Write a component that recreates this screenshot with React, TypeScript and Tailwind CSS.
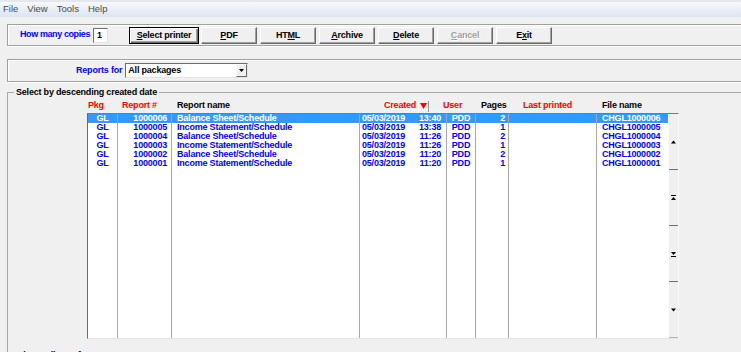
import React from "react";

interface Report {
  pkg: string;
  num: string;
  name: string;
  date: string;
  time: string;
  user: string;
  pages: string;
  printed: string;
  file: string;
}

const REPORTS: Report[] = [
  { pkg: "GL", num: "1000006", name: "Balance Sheet/Schedule", date: "05/03/2019", time: "13:40", user: "PDD", pages: "2", printed: "", file: "CHGL1000006" },
  { pkg: "GL", num: "1000005", name: "Income Statement/Schedule", date: "05/03/2019", time: "13:38", user: "PDD", pages: "1", printed: "", file: "CHGL1000005" },
  { pkg: "GL", num: "1000004", name: "Balance Sheet/Schedule", date: "05/03/2019", time: "11:26", user: "PDD", pages: "2", printed: "", file: "CHGL1000004" },
  { pkg: "GL", num: "1000003", name: "Income Statement/Schedule", date: "05/03/2019", time: "11:26", user: "PDD", pages: "1", printed: "", file: "CHGL1000003" },
  { pkg: "GL", num: "1000002", name: "Balance Sheet/Schedule", date: "05/03/2019", time: "11:20", user: "PDD", pages: "2", printed: "", file: "CHGL1000002" },
  { pkg: "GL", num: "1000001", name: "Income Statement/Schedule", date: "05/03/2019", time: "11:20", user: "PDD", pages: "1", printed: "", file: "CHGL1000001" },
];

const COLUMNS: { width: string; align: string; cell: (r: Report) => React.ReactNode }[] = [
  { width: "w-[30px]", align: "justify-center", cell: (r) => r.pkg },
  { width: "w-[54px]", align: "justify-end pr-[4px]", cell: (r) => r.num },
  { width: "w-[188px]", align: "justify-start pl-[5px]", cell: (r) => r.name },
  {
    width: "w-[87px]",
    align: "justify-between pl-[2px] pr-[5px]",
    cell: (r) => (
      <>
        <span>{r.date}</span>
        <span>{r.time}</span>
      </>
    ),
  },
  { width: "w-[29px]", align: "justify-center", cell: (r) => r.user },
  { width: "w-[33px]", align: "justify-end pr-[3px]", cell: (r) => r.pages },
  { width: "w-[88px]", align: "justify-start pl-[4px]", cell: (r) => r.printed },
  { width: "w-[71px]", align: "justify-start pl-[5px]", cell: (r) => r.file },
];

const BUTTONS = [
  { pre: "", key: "S", post: "elect printer", width: "w-[70px]", gap: "", primary: true, disabled: false },
  { pre: "", key: "P", post: "DF", width: "w-[56px]", gap: "ml-[2px]", primary: false, disabled: false },
  { pre: "HT", key: "M", post: "L", width: "w-[56px]", gap: "ml-[3px]", primary: false, disabled: false },
  { pre: "", key: "A", post: "rchive", width: "w-[56px]", gap: "ml-[3px]", primary: false, disabled: false },
  { pre: "", key: "D", post: "elete", width: "w-[56px]", gap: "ml-[3px]", primary: false, disabled: false },
  { pre: "", key: "C", post: "ancel", width: "w-[56px]", gap: "ml-[3px]", primary: false, disabled: true },
  { pre: "E", key: "x", post: "it", width: "w-[56px]", gap: "ml-[3px]", primary: false, disabled: false },
];

function ScrollGlyph({ kind }: { kind: "up" | "pageUp" | "pageDown" | "down" }) {
  return (
    <svg width="5" height="6" viewBox="0 0 5 6" className="block">
      {kind === "up" && <path d="M2.5 1.5 L5 4.5 L0 4.5 Z" fill="#000" />}
      {kind === "down" && <path d="M0 1.5 L5 1.5 L2.5 4.5 Z" fill="#000" />}
      {kind === "pageUp" && (
        <>
          <rect x="0" y="0" width="5" height="1" fill="#000" />
          <path d="M2.5 2 L5 5 L0 5 Z" fill="#000" />
        </>
      )}
      {kind === "pageDown" && (
        <>
          <path d="M0 1 L5 1 L2.5 4 Z" fill="#000" />
          <rect x="0" y="5" width="5" height="1" fill="#000" />
        </>
      )}
    </svg>
  );
}

export default function App() {
  return (
    <div className="w-[741px] h-[352px] overflow-hidden bg-[#f0f0f0] [font-family:'Liberation_Sans',Arial,sans-serif] text-[9px] tracking-[-0.2px] font-bold text-black">
      {/* Menu bar */}
      <div className="h-[17px] flex items-center gap-[9px] pl-[3px] border-t-[2px] border-[#e4e8ee] bg-gradient-to-b from-[#f6f9fc] to-[#dbe5f1] text-[9.5px] tracking-normal font-normal text-[#4a4a4a]">
        <span>File</span>
        <span>View</span>
        <span>Tools</span>
        <span>Help</span>
      </div>

      {/* Copies + action buttons */}
      <div className="mt-[7px] ml-[7px] w-[745px] h-[22px] flex items-center pl-[12px] border border-[#a0a0a0] shadow-[inset_1px_1px_0_#fff,0_1px_0_#fff]">
        <span className="text-[#0000ff] tracking-[-0.4px]">How many copies</span>
        <div className="ml-[3px] w-[15px] h-[15px] bg-white border border-t-[#6d6d6d] border-l-[#6d6d6d] border-r-[#e3e3e3] border-b-[#e3e3e3] pl-[3px] leading-[13px]">
          1
        </div>
        <div className="ml-[21px] flex items-center">
          {BUTTONS.map((b) => (
            <button
              key={b.key + b.post}
              className={`${b.width} ${b.gap} h-[17px] flex items-center justify-center bg-[#f0f0f0] font-bold leading-none ${
                b.primary
                  ? "border border-black shadow-[inset_1px_1px_0_#fff,inset_-1px_-1px_0_#696969,inset_-2px_-2px_0_#a0a0a0]"
                  : "border border-t-white border-l-white border-r-[#696969] border-b-[#696969] shadow-[inset_-1px_-1px_0_#a0a0a0]"
              } ${b.disabled ? "text-[#a0a0a0] [text-shadow:1px_1px_0_#fff]" : "text-black"}`}
            >
              {b.pre}
              <span className="underline underline-offset-1">{b.key}</span>
              {b.post}
            </button>
          ))}
        </div>
      </div>

      {/* Package filter */}
      <div className="mt-[13px] ml-[7px] w-[745px] h-[23px] flex items-center pl-[68px] border border-[#a0a0a0] shadow-[inset_1px_1px_0_#fff,0_1px_0_#fff]">
        <span className="text-[#0000ff]">Reports for</span>
        <div className="ml-[3px] w-[123px] h-[15px] flex items-center bg-white border border-t-[#6d6d6d] border-l-[#6d6d6d] border-r-[#e3e3e3] border-b-[#e3e3e3]">
          <span className="flex-1 pl-[2px]">All packages</span>
          <span className="w-[11px] h-[13px] flex items-center justify-center bg-[#f0f0f0] border border-t-white border-l-white border-r-[#696969] border-b-[#696969]">
            <svg width="5" height="3" viewBox="0 0 5 3">
              <path d="M0 0 L5 0 L2.5 3 Z" fill="#000" />
            </svg>
          </span>
        </div>
      </div>

      {/* Report list group */}
      <fieldset className="mt-[4px] ml-[7px] p-0 border-t border-l border-r-0 border-b-0 border-[#a8a8a8]">
        <legend className="ml-[6px] px-[2px] leading-[12px]">Select by descending created date</legend>

        {/* Column headers */}
        <div className="mt-[1px] h-[14px] ml-[80px] flex items-center">
          <span className="w-[34px] text-[#ff0000]">Pkg</span>
          <span className="w-[55px] text-[#ff0000]">Report #</span>
          <span className="w-[207px]">Report name</span>
          <span className="w-[34px] text-[#ff0000]">Created</span>
          <span className="w-[11px] h-[11px] mr-[14px] flex items-center justify-center border-r border-[#9a9a9a] shadow-[inset_1px_0_0_#fff]">
            <svg width="7" height="6" viewBox="0 0 7 6">
              <path d="M0 0 L7 0 L3.5 6 Z" fill="#ff0000" />
            </svg>
          </span>
          <span className="w-[38px] text-[#ff0000]">User</span>
          <span className="w-[42px]">Pages</span>
          <span className="w-[79px] text-[#ff0000]">Last printed</span>
          <span>File name</span>
        </div>

        {/* List */}
        <div className="ml-[79px] w-[592px] h-[226px] flex border border-t-[#7a7a7a] border-l-[#6a6a6a] border-r-[#f8f8f8] border-b-[#e6e6e6]">
          <div className="flex bg-white">
            {COLUMNS.map((col, ci) => (
              <div
                key={ci}
                className={`${col.width} shrink-0 flex flex-col ${ci < COLUMNS.length - 1 ? "border-r border-[#a8a8a8]" : ""}`}
              >
                {REPORTS.map((r, ri) => (
                  <div
                    key={ri}
                    className={`h-[9px] leading-[9px] flex items-center whitespace-nowrap ${col.align} ${
                      ri === 0 ? "bg-[#3399ff] text-white" : "text-[#0000ff]"
                    }`}
                  >
                    {col.cell(r)}
                  </div>
                ))}
              </div>
            ))}
          </div>
          <div className="w-[10px] flex flex-col bg-[#f0f0f0] border-l border-white">
            <div className="flex-1 flex items-center justify-center border-b border-[#6f6f6f]">
              <ScrollGlyph kind="up" />
            </div>
            <div className="flex-1 flex items-center justify-center border-b border-[#6f6f6f]">
              <ScrollGlyph kind="pageUp" />
            </div>
            <div className="flex-1 flex items-center justify-center border-b border-[#6f6f6f]">
              <ScrollGlyph kind="pageDown" />
            </div>
            <div className="flex-1 flex items-center justify-center border-b border-[#b5b5b5]">
              <ScrollGlyph kind="down" />
            </div>
          </div>
        </div>

        <div className="mt-[10px] ml-[10px] leading-[12px]">First 10 lines of report</div>
      </fieldset>
    </div>
  );
}
